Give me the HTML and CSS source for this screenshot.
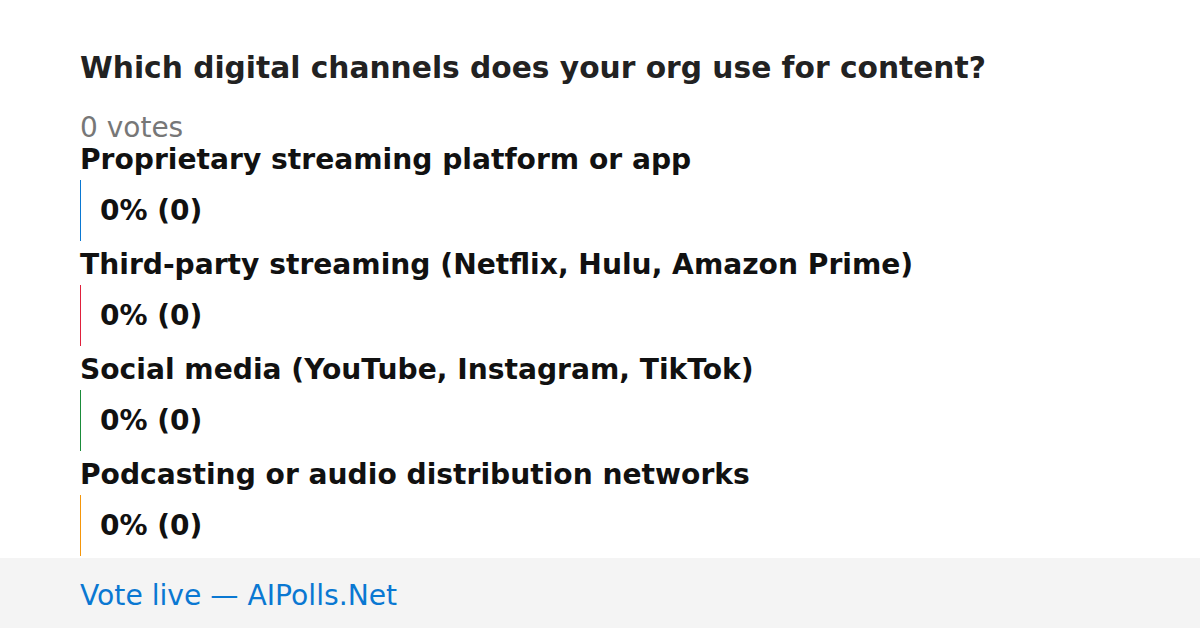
FILE: index.html
```html
<!DOCTYPE html>
<html lang="en">

<head>
  <meta charset="UTF-8">
  <meta name="viewport" content="width=device-width, initial-scale=1.0">
  <title>Poll results</title>
  <link rel="stylesheet" href="styles.css">
</head>

<body>

  <main class="poll">
    <h1 class="pollTitle">Which digital channels does your org use for content?</h1>
    <div class="voteCount">0 votes</div>

    <div class="option">
      <div class="optionLabel">Proprietary streaming platform or app</div>
      <div class="optionBar blue">0% (0)</div>
    </div>

    <div class="option">
      <div class="optionLabel">Third-party streaming (Netflix, Hulu, Amazon Prime)</div>
      <div class="optionBar red">0% (0)</div>
    </div>

    <div class="option">
      <div class="optionLabel">Social media (YouTube, Instagram, TikTok)</div>
      <div class="optionBar green">0% (0)</div>
    </div>

    <div class="option">
      <div class="optionLabel">Podcasting or audio distribution networks</div>
      <div class="optionBar orange">0% (0)</div>
    </div>
  </main>

  <footer class="footer">Vote live — AIPolls.Net</footer>

</body>

</html>
```

FILE: styles.css
```css
body {
  margin: 0;
  height: 628px;
  display: flex;
  flex-direction: column;
  overflow: hidden;
  font-family: "DejaVu Sans", sans-serif;
  background: #fff;
}

.poll {
  flex: 1;
  min-height: 0;
  padding: 50px 80px 0;
}

.pollTitle {
  margin: 0;
  font-size: 29.7px;
  line-height: 36px;
  color: #222;
}

.voteCount {
  margin-top: 27px;
  font-size: 28px;
  line-height: 30px;
  color: #777;
}

.option {
  margin-bottom: 7px;
}

.option:last-child {
  margin-bottom: 0;
}

.optionLabel {
  font-size: 28.15px;
  font-weight: bold;
  line-height: 34px;
  color: #111;
  margin-bottom: 3px;
}

.optionBar {
  height: 61px;
  display: flex;
  align-items: center;
  padding-left: 19px;
  border-left: 1px solid;
  font-size: 28px;
  font-weight: bold;
  color: #111;
}

/* bar colours */
.blue { border-color: #0a78d2; }
.red { border-color: #e0203c; }
.green { border-color: #1a8c3a; }
.orange { border-color: #f5960a; }

.footer {
  flex-shrink: 0;
  height: 70px;
  box-sizing: border-box;
  padding: 4px 0 0 80px;
  display: flex;
  align-items: center;
  background: #f4f4f4;
  font-size: 28.2px;
  color: #0a78d2;
}
```
